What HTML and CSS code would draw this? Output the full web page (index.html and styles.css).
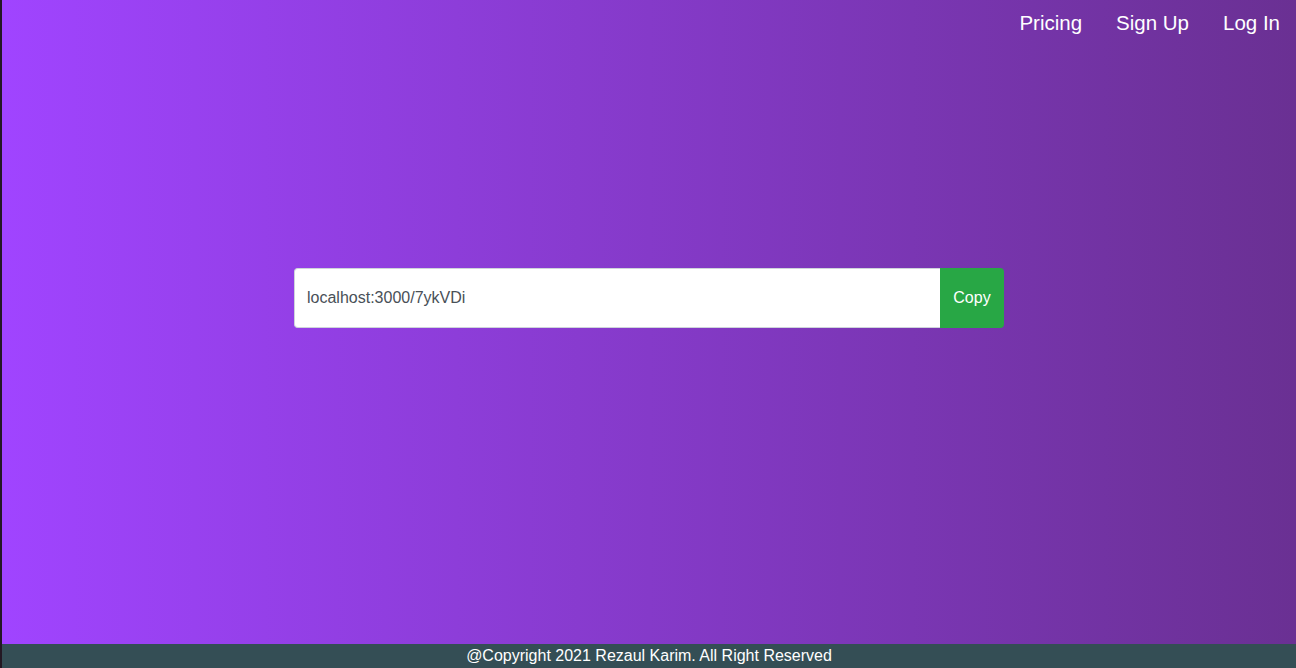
FILE: index.html
```html
<!DOCTYPE html>
<html>
<head>
<meta charset="utf-8">
<link rel="stylesheet" href="styles.css">
</head>
<body>
<div class="page">
  <nav class="nav">
    <a class="nav-link" href="#">Pricing</a>
    <a class="nav-link" href="#">Sign Up</a>
    <a class="nav-link" href="#">Log In</a>
  </nav>
  <main class="main">
    <div class="url-group">
      <div class="url-input">localhost:3000/7ykVDi</div>
      <button class="copy-btn">Copy</button>
    </div>
  </main>
  <footer class="footer">@Copyright 2021 Rezaul Karim. All Right Reserved</footer>
</div>
</body>
</html>
```

FILE: styles.css
```css
* { box-sizing: border-box; }
html, body { margin: 0; padding: 0; height: 100%; }
body {
  font-family: "Liberation Sans", Arial, sans-serif;
  background: #231823;
  padding-left: 2px;
}
.page {
  height: 668px;
  display: flex;
  flex-direction: column;
  background: linear-gradient(to right, #a044ff, #6a3093);
}
.nav {
  height: 46px;
  display: flex;
  justify-content: flex-end;
  align-items: center;
  gap: 34px;
  padding: 0 16px 0 0;
}
.nav-link {
  color: #fff;
  text-decoration: none;
  font-size: 20.5px;
  line-height: 24px;
}
.main {
  flex: 1;
  display: flex;
  justify-content: center;
  align-items: flex-start;
  padding-top: 222px;
}
.url-group {
  display: flex;
  width: 710px;
  height: 60px;
}
.url-input {
  flex: 1;
  background: #fff;
  border: 1px solid #ced4da;
  border-right: none;
  border-radius: 4px 0 0 4px;
  color: #495057;
  font-size: 16px;
  display: flex;
  align-items: center;
  padding-left: 12px;
}
.copy-btn {
  width: 64px;
  background: #28a745;
  border: none;
  border-radius: 0 4px 4px 0;
  color: #fff;
  font-family: "Liberation Sans", Arial, sans-serif;
  font-size: 16px;
  padding: 0;
}
.footer {
  height: 24px;
  background: #344e55;
  color: #fff;
  text-align: center;
  font-size: 16px;
  line-height: 24px;
}
```
